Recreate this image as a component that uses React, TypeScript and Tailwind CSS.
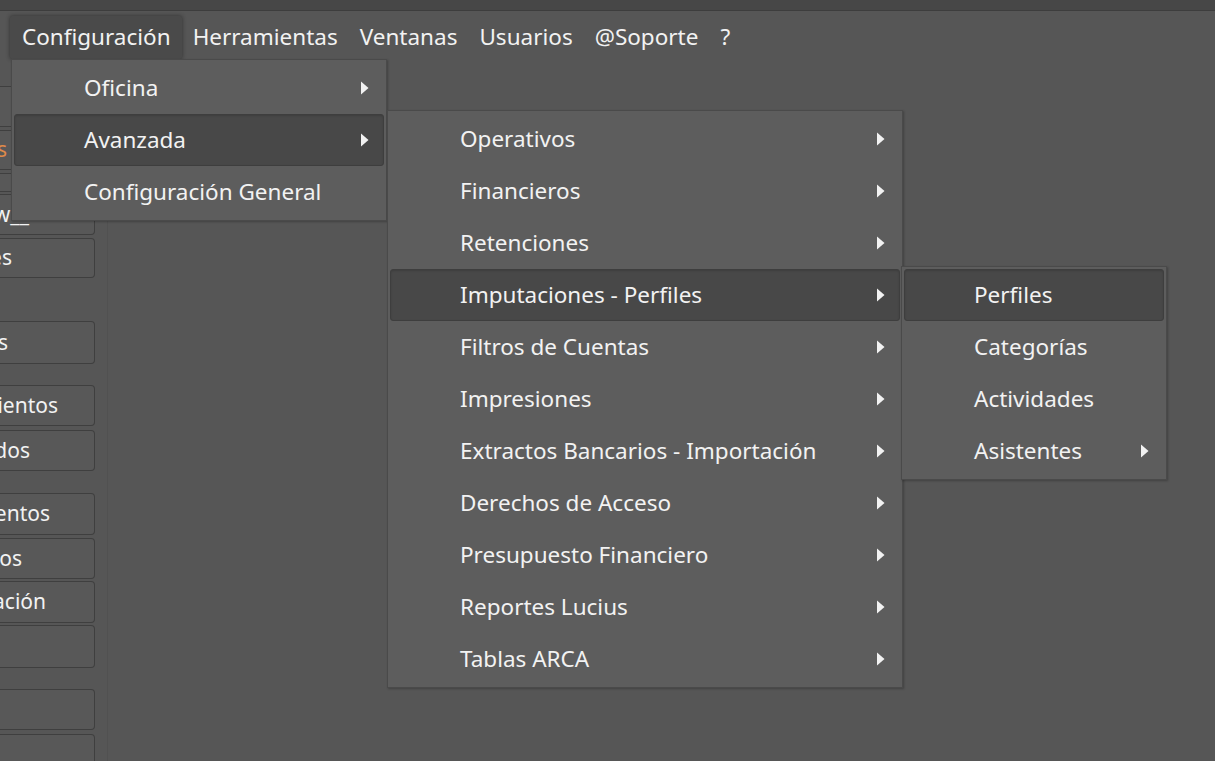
import React from "react";

type Item = { label: string; sub?: boolean; active?: boolean };

const topMenu = ["Configuración", "Herramientas", "Ventanas", "Usuarios", "@Soporte", "?"];

const menu1: Item[] = [
  { label: "Oficina", sub: true },
  { label: "Avanzada", sub: true, active: true },
  { label: "Configuración General" },
];

const menu2: Item[] = [
  { label: "Operativos", sub: true },
  { label: "Financieros", sub: true },
  { label: "Retenciones", sub: true },
  { label: "Imputaciones - Perfiles", sub: true, active: true },
  { label: "Filtros de Cuentas", sub: true },
  { label: "Impresiones", sub: true },
  { label: "Extractos Bancarios - Importación", sub: true },
  { label: "Derechos de Acceso", sub: true },
  { label: "Presupuesto Financiero", sub: true },
  { label: "Reportes Lucius", sub: true },
  { label: "Tablas ARCA", sub: true },
];

const menu3: Item[] = [
  { label: "Perfiles", active: true },
  { label: "Categorías" },
  { label: "Actividades" },
  { label: "Asistentes", sub: true },
];

// side buttons, only their right end is visible; labels are cut off on the left
const sideRows: { text: string; top: number; h: number; end?: number; orange?: boolean }[] = [
  { text: "", top: 27, h: 41 },
  { text: "s", top: 3, h: 40, end: 8, orange: true },
  { text: "", top: 3, h: 19 },
  { text: "w__", top: 2, h: 41, end: 30 },
  { text: "es", top: 3, h: 40, end: 13 },
  { text: "s", top: 43, h: 43, end: 9 },
  { text: "ientos", top: 21, h: 41, end: 59 },
  { text: "dos", top: 4, h: 41, end: 31 },
  { text: "entos", top: 22, h: 42, end: 51 },
  { text: "os", top: 3, h: 41, end: 23 },
  { text: "ación", top: 2, h: 42, end: 47 },
  { text: "", top: 2, h: 43 },
  { text: "", top: 21, h: 41 },
  { text: "", top: 4, h: 41 },
];

function Arrow() {
  return (
    <svg width="9" height="14" viewBox="0 0 9 14" className="shrink-0">
      <path d="M1 0.5 L8.5 7 L1 13.5 Z" fill="#f2f2f2" />
    </svg>
  );
}

function Menu({ items, className }: { items: Item[]; className: string }) {
  return (
    <div
      className={`absolute bg-[#5d5d5d] border border-[#4a4a4a] p-[2px] shadow-[1px_1px_2px_rgba(0,0,0,0.25)] ${className}`}
    >
      {items.map((it) => (
        <div
          key={it.label}
          className={`h-[52px] flex items-center pl-[69px] pr-[14px] rounded-[3px] border ${
            it.active
              ? "bg-[#484848] border-[#3e3e3e] shadow-[inset_0_1px_2px_rgba(0,0,0,0.15)]"
              : "border-transparent"
          }`}
        >
          <span className="flex-1 whitespace-nowrap">{it.label}</span>
          {it.sub && <Arrow />}
        </div>
      ))}
    </div>
  );
}

export default function App() {
  return (
    <div
      className="relative w-[1215px] h-[761px] overflow-hidden bg-[#565656] text-[#f2f2f2] text-[22.5px]"
      style={{ fontFamily: '"Noto Sans", "Open Sans", sans-serif' }}
    >
      <div className="h-[11px] bg-[#474747] border-b border-[#3d3d3d]" />

      <div className="h-[48px] flex items-center pl-[10px] pt-[4px]">
        {topMenu.map((m, i) => (
          <div
            key={m}
            className={`h-[43px] flex items-center px-[11px] leading-none ${
              i === 0
                ? "bg-[#4a4a4a] shadow-[0_0_4px_rgba(0,0,0,0.45)] rounded-[2px] pl-[12px]"
                : ""
            }`}
          >
            {m}
          </div>
        ))}
      </div>

      <div className="flex">
        <div className="w-[96px] h-[702px] overflow-hidden flex flex-col">
          {sideRows.map((r, i) => (
            <div
              key={i}
              style={{ marginTop: r.top, height: r.h }}
              className="relative shrink-0 w-[95px] rounded-r-[4px] border border-l-0 border-[#3f3f3f] bg-[#585858] text-[21px] overflow-hidden"
            >
              {r.text && (
                <span
                  className={`absolute top-1/2 -translate-y-1/2 whitespace-nowrap ${r.orange ? "text-[#e08a4a]" : ""}`}
                  style={{ right: 95 - (r.end ?? 0) }}
                >
                  {r.text}
                </span>
              )}
            </div>
          ))}
        </div>
        <div className="ml-[11px] w-px h-[702px] bg-[#515151]" />
      </div>

      <Menu items={menu1} className="left-[11px] top-[59px] w-[376px]" />
      <Menu items={menu2} className="left-[387px] top-[110px] w-[516px]" />
      <Menu items={menu3} className="left-[901px] top-[266px] w-[266px]" />
    </div>
  );
}
